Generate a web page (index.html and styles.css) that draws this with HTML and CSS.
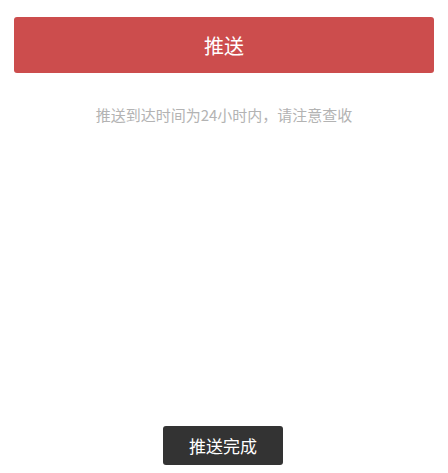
FILE: index.html
```html
<!DOCTYPE html>
<html lang="zh">
<head>
<meta charset="utf-8">
<link rel="stylesheet" href="styles.css">
</head>
<body>
<div class="page">
  <button class="push-btn">推送</button>
  <p class="hint">推送到达时间为24小时内，请注意查收</p>
</div>
<div class="toast">推送完成</div>
</body>
</html>
```
FILE: styles.css
```css
html, body {
  margin: 0;
  padding: 0;
  background: #ffffff;
  font-family: "Noto Sans CJK SC", "Noto Sans", sans-serif;
}
.page {
  padding: 17px 14px 0 14px;
  display: flex;
  flex-direction: column;
}
.push-btn {
  height: 56px;
  border: none;
  border-radius: 3px;
  background: #cc4d4d;
  color: #ffffff;
  font-family: inherit;
  font-size: 20px;
  padding: 0;
}
.hint {
  margin: 31px 0 0 0;
  text-align: center;
  color: #b3b3b3;
  font-size: 15px;
  line-height: 22px;
}
.toast {
  position: absolute;
  left: 163px;
  top: 426px;
  width: 120px;
  height: 39px;
  background: #333333;
  color: #ffffff;
  border-radius: 3px;
  font-size: 17px;
  display: flex;
  align-items: center;
  justify-content: center;
}
```
